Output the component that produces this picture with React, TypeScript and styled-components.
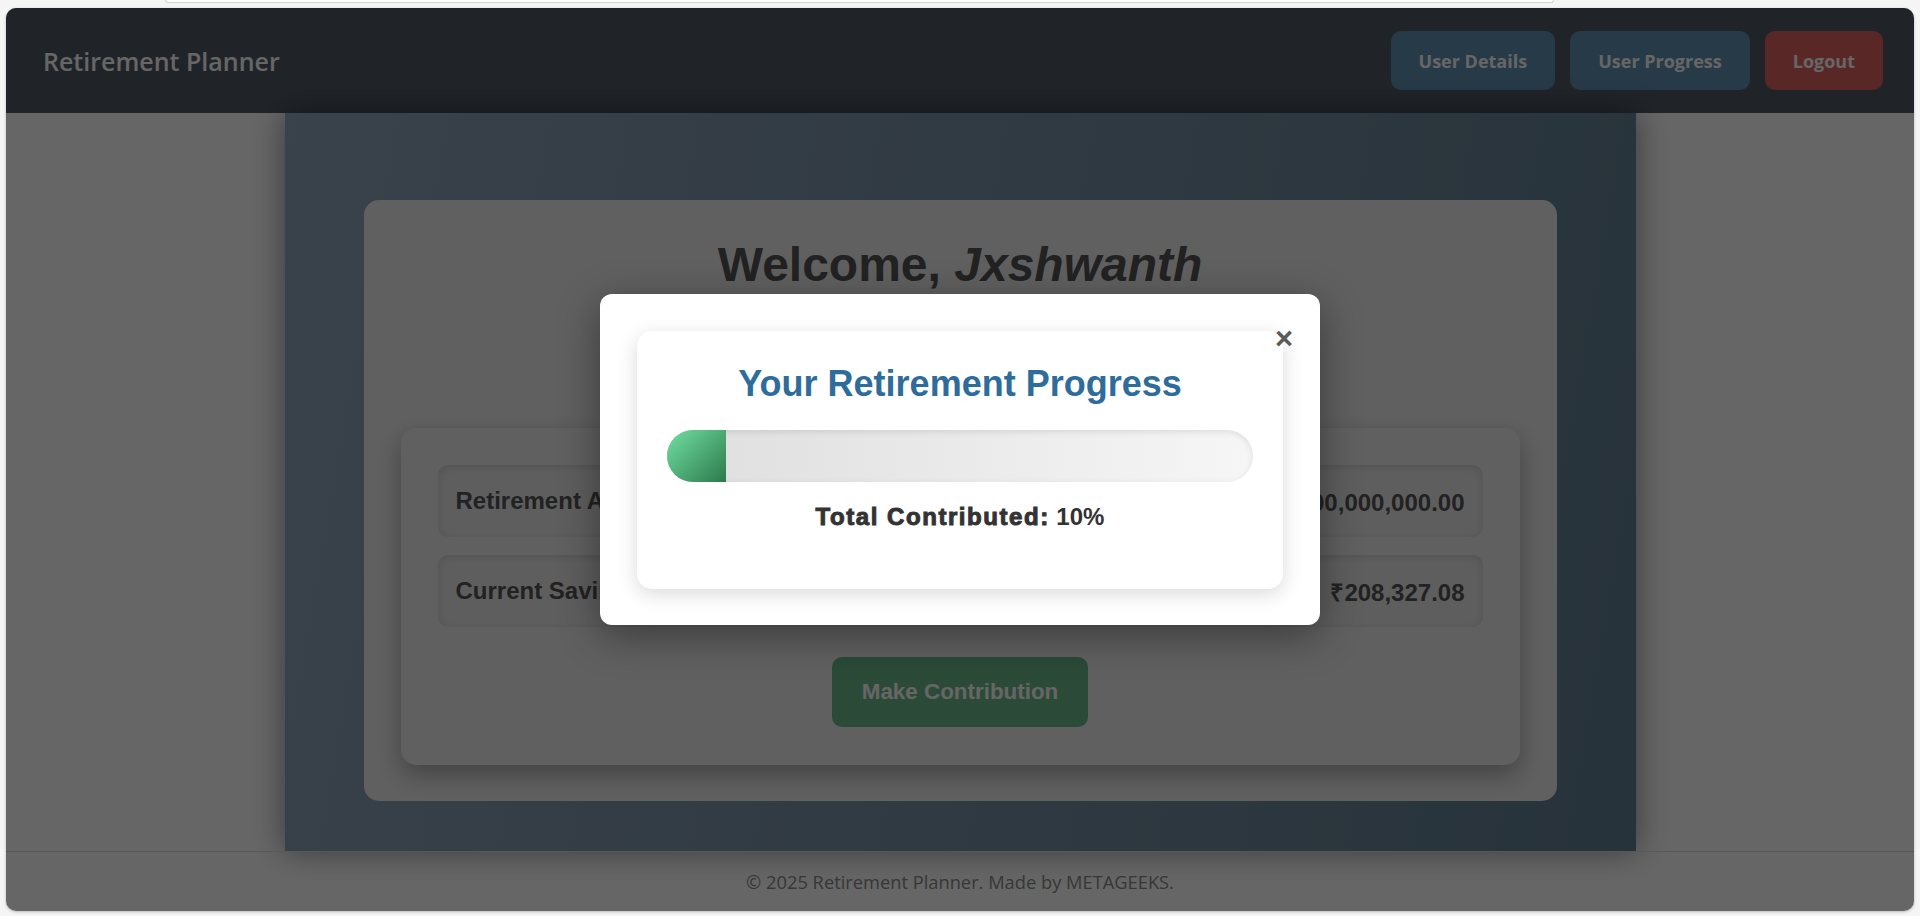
import React from "react";
import styled, { createGlobalStyle } from "styled-components";

const GlobalStyle = createGlobalStyle`
  * { box-sizing: border-box; }
  html, body { margin: 0; padding: 0; height: 100%; }
  body {
    background: #f5f5f5;
    font-family: "Liberation Sans", Arial, sans-serif;
    overflow: hidden;
  }
`;

const Screen = styled.div`
  height: 916px;
  display: flex;
  flex-direction: column;
`;

const TopStrip = styled.div`
  height: 8px;
  flex-shrink: 0;
  display: flex;
`;

const TabEdge = styled.div`
  margin-left: 165px;
  width: 1389px;
  height: 3px;
  background: #ffffff;
  border: 1px solid #d2d2d2;
  border-top: none;
  border-radius: 0 0 8px 8px;
`;

const Frame = styled.div`
  position: relative;
  margin: 0 6px;
  height: 903px;
  border-radius: 10px;
  overflow: hidden;
  background: #ffffff;
  display: flex;
  flex-direction: column;
  box-shadow: 0 1px 3px rgba(0, 0, 0, 0.25);
`;

const Navbar = styled.header`
  height: 105px;
  flex-shrink: 0;
  background: #525a66;
  display: flex;
  align-items: center;
  justify-content: space-between;
  padding: 0 31px 0 37px;
`;

const Brand = styled.div`
  font-family: "Open Sans", sans-serif;
  font-weight: 600;
  font-size: 25px;
  color: #ffffff;
`;

const NavActions = styled.nav`
  display: flex;
  gap: 15px;
`;

const NavButton = styled.button<{ $variant?: "primary" | "danger" }>`
  height: 59px;
  padding: 0 28px;
  border: none;
  border-radius: 10px;
  background: ${(p) => (p.$variant === "danger" ? "#e16262" : "#6291b2")};
  color: #ffffff;
  font-family: "Open Sans", sans-serif;
  font-weight: 700;
  font-size: 18px;
`;

const Main = styled.main`
  flex: 1;
  display: flex;
  justify-content: center;
`;

const Panel = styled.section`
  width: 1351px;
  padding: 87px 79px 50px;
  background: linear-gradient(100deg, #91a5bb, #617f91);
  box-shadow: 0 0 30px rgba(0, 0, 0, 0.45);
`;

const WelcomeCard = styled.div`
  background: #f0f0f0;
  border-radius: 15px;
  padding: 37px 37px 36px;
`;

const Heading = styled.h1`
  margin: 0 0 136px;
  text-align: center;
  font-size: 48px;
  font-weight: 700;
  line-height: normal;
  color: #555555;
`;

const Name = styled.em`
  font-style: italic;
`;

const StatsCard = styled.div`
  background: #f0f0f0;
  border-radius: 15px;
  padding: 37px 37px 38px;
  box-shadow: 0 10px 25px rgba(0, 0, 0, 0.3);
  display: flex;
  flex-direction: column;
  align-items: center;
`;

const StatRows = styled.div`
  width: 100%;
  display: flex;
  flex-direction: column;
  gap: 18px;
`;

const StatRow = styled.div`
  height: 72px;
  display: flex;
  justify-content: space-between;
  align-items: center;
  padding: 0 18px;
  border-radius: 10px;
  background: #ebebeb;
  box-shadow: inset 0 2px 8px rgba(0, 0, 0, 0.12);
  font-size: 24px;
  font-weight: 700;
  color: #555555;
`;

const ContributeButton = styled.button`
  margin-top: 30px;
  height: 70px;
  padding: 0 30px;
  border: none;
  border-radius: 10px;
  background: #6cb98c;
  color: #ffffff;
  font-family: "Liberation Sans", Arial, sans-serif;
  font-weight: 700;
  font-size: 22.4px;
`;

const Footer = styled.footer`
  height: 60px;
  flex-shrink: 0;
  border-top: 1px solid #dddddd;
  display: flex;
  align-items: center;
  justify-content: center;
  font-family: "Open Sans", sans-serif;
  font-size: 18.3px;
  color: #8a8a8a;
`;

const Overlay = styled.div`
  position: absolute;
  inset: 0;
  background: rgba(0, 0, 0, 0.6);
  display: flex;
  align-items: center;
  justify-content: center;
`;

const Modal = styled.div`
  position: relative;
  width: 720px;
  padding: 37px 37px 36px;
  background: #ffffff;
  border-radius: 12px;
  box-shadow: 0 10px 40px rgba(0, 0, 0, 0.4);
`;

const CloseButton = styled.button`
  position: absolute;
  top: 29px;
  right: 27px;
  padding: 0;
  border: none;
  background: none;
  font-family: "Liberation Sans", Arial, sans-serif;
  font-size: 31px;
  font-weight: 700;
  line-height: 1;
  color: #5a5a5a;
`;

const ProgressCard = styled.div`
  background: #ffffff;
  border-radius: 15px;
  padding: 32px 30px 58px;
  box-shadow: 0 5px 20px rgba(0, 0, 0, 0.15);
  text-align: center;
`;

const ProgressTitle = styled.h2`
  margin: 0 0 25px;
  font-size: 36px;
  font-weight: 700;
  line-height: normal;
  color: #2e6c9c;
`;

const Track = styled.div`
  height: 52px;
  border-radius: 26px;
  overflow: hidden;
  background: linear-gradient(90deg, #dedede, #f6f6f6);
  box-shadow: inset 0 2px 6px rgba(0, 0, 0, 0.1);
`;

const Fill = styled.div`
  height: 100%;
  background: linear-gradient(135deg, #72e0a2, #2c7a4c);
`;

const Summary = styled.p`
  margin: 21px 0 0;
  font-size: 24px;
  font-weight: 700;
  line-height: normal;
  color: #333333;
`;

const SummaryLabel = styled.strong`
  font-weight: 700;
  letter-spacing: 1.55px;
  -webkit-text-stroke: 1px #333333;
`;

const stats = [
  { label: "Retirement Amount:", value: "₹100,000,000.00" },
  { label: "Current Savings:", value: "₹208,327.08" },
];

const progress = 10;

export default function App() {
  return (
    <>
      <GlobalStyle />
      <Screen>
        <TopStrip>
          <TabEdge />
        </TopStrip>
        <Frame>
          <Navbar>
            <Brand>Retirement Planner</Brand>
            <NavActions>
              <NavButton>User Details</NavButton>
              <NavButton>User Progress</NavButton>
              <NavButton $variant="danger">Logout</NavButton>
            </NavActions>
          </Navbar>
          <Main>
            <Panel>
              <WelcomeCard>
                <Heading>
                  Welcome, <Name>Jxshwanth</Name>
                </Heading>
                <StatsCard>
                  <StatRows>
                    {stats.map((s) => (
                      <StatRow key={s.label}>
                        <span>{s.label}</span>
                        <span>{s.value}</span>
                      </StatRow>
                    ))}
                  </StatRows>
                  <ContributeButton>Make Contribution</ContributeButton>
                </StatsCard>
              </WelcomeCard>
            </Panel>
          </Main>
          <Footer>© 2025 Retirement Planner. Made by METAGEEKS.</Footer>
          <Overlay>
            <Modal>
              <CloseButton aria-label="Close">×</CloseButton>
              <ProgressCard>
                <ProgressTitle>Your Retirement Progress</ProgressTitle>
                <Track>
                  <Fill style={{ width: `${progress}%` }} />
                </Track>
                <Summary>
                  <SummaryLabel>Total Contributed:</SummaryLabel> {progress}%
                </Summary>
              </ProgressCard>
            </Modal>
          </Overlay>
        </Frame>
      </Screen>
    </>
  );
}
